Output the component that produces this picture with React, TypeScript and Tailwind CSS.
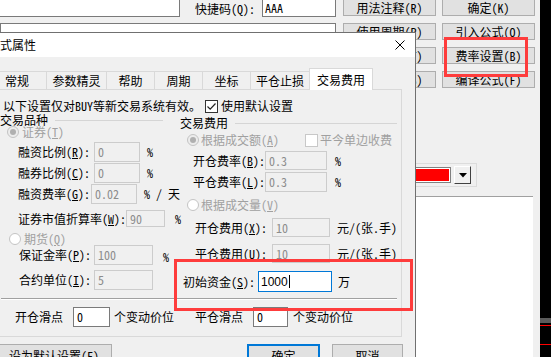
import React from "react";

function M({ t }: { t: string }) {
  const m = t.match(/^(.*\()(.)(\).*)$/);
  if (!m) return <>{t}</>;
  return (
    <>
      {m[1]}
      <span className="underline underline-offset-[1px]">{m[2]}</span>
      {m[3]}
    </>
  );
}

function Radio({ on }: { on?: boolean }) {
  return (
    <span
      className={`w-[12px] h-[12px] rounded-full border border-[#c4c4c4] flex items-center justify-center shrink-0 ${
        on ? "bg-[#ececec]" : "bg-white"
      }`}
    >
      {on && <span className="w-[6px] h-[6px] rounded-full bg-[#b0b0b0]" />}
    </span>
  );
}

function DI({ cls, v }: { cls: string; v: string }) {
  return (
    <div
      className={`${cls} border border-[#cccccc] bg-[#f0f0f0] text-[#8c8c8c] flex items-center pl-[3px] shrink-0`}
    >
      {v}
    </div>
  );
}

function Btn({ cls, children }: { cls: string; children: React.ReactNode }) {
  return (
    <div
      className={`${cls} bg-[#e1e1e1] border border-[#adadad] flex items-center justify-center shrink-0 whitespace-nowrap`}
    >
      {children}
    </div>
  );
}

export default function App() {
  return (
    <div className="relative w-[551px] h-[357px] overflow-hidden bg-[#f0f0f0] text-[12px] leading-none text-black font-['Noto_Sans_Mono_CJK_SC','Noto_Sans_CJK_SC',sans-serif] flex">
      {/* background window */}
      <div className="flex-1 flex flex-col">
        <div className="h-[88px] flex shrink-0">
          <div className="flex flex-col w-[336px]">
            <div className="flex items-center h-[17px]">
              <div className="w-[180px] h-[17px] bg-white border-r border-b border-[#7a7a7a]" />
              <span className="ml-[15px] w-[67px]">快捷码(Q):</span>
              <div className="w-[74px] h-[17px] bg-white border-l border-r border-b border-[#7a7a7a] flex items-center pl-[2px]">
                AAA
              </div>
            </div>
            <div className="mt-[6px] w-[336px] h-[20px] bg-white border border-[#7a7a7a]" />
          </div>
          <div className="ml-[7px] mt-[-1px] grid grid-cols-[93px_93px] grid-rows-[17px_17px_17px_17px] gap-x-[6px] gap-y-[7px]">
            <Btn cls="h-[17px]">用法注释(R)</Btn>
            <Btn cls="h-[17px]">确定(K)</Btn>
            <Btn cls="h-[17px]">使用周期(P)</Btn>
            <Btn cls="h-[17px]">引入公式(O)</Btn>
            <Btn cls="h-[17px]">测试公式(T)</Btn>
            <Btn cls="h-[17px]">费率设置(B)</Btn>
            <Btn cls="h-[17px]">参数设置(S)</Btn>
            <Btn cls="h-[17px]">编译公式(F)</Btn>
          </div>
        </div>
        <div className="mt-[75px] ml-[380px] w-[97px] h-[24px] border border-[#dcdcdc] flex items-center pr-[5px] shrink-0">
          <div className="flex-1 h-[16px] border border-[#808080] p-[1px] bg-white">
            <div className="w-full h-full bg-[#ff0000]" />
          </div>
          <div className="ml-[3px] w-[17px] h-[18px] border border-t-white border-l-white border-r-[#404040] border-b-[#404040] bg-[#f0f0f0] flex items-center justify-center">
            <svg width="8" height="5" viewBox="0 0 8 5">
              <path d="M0 0H8L4 4.5Z" fill="#000" />
            </svg>
          </div>
        </div>
        <div className="mt-[9px] ml-[380px] w-[153px] flex-1 bg-white border-t border-[#a0a0a0]" />
      </div>
      <div className="w-[11px] bg-black flex flex-col shrink-0">
        <div className="mt-[318px] h-[5px] bg-[#5a5a5a]" />
        <div className="mt-[2px] h-px bg-[#ff0000]" />
        <div className="mt-[18px] h-px bg-[#ff0000]" />
      </div>

      {/* dialog */}
      <div className="absolute left-0 top-[32px] w-[416px] h-[325px] z-10 flex flex-col bg-[#f0f0f0] border-t border-r border-[#707070]">
        <div className="h-[24px] bg-white flex items-center shrink-0">
          <span className="ml-[-12px]">公式属性</span>
          <svg className="ml-auto mr-[10px]" width="10" height="10" viewBox="0 0 10 10">
            <path d="M0.5 0.5L9.5 9.5M9.5 0.5L0.5 9.5" stroke="#000" strokeWidth="1" />
          </svg>
        </div>

        <div className="mt-[11px] h-[21px] flex items-end relative z-10 shrink-0">
          <div className="ml-[-13px] w-[59px] h-[18px] border-t border-l border-[#d9d9d9] flex items-center justify-center">常规</div>
          <div className="w-[60px] h-[18px] border-t border-l border-[#d9d9d9] flex items-center justify-center">参数精灵</div>
          <div className="w-[48px] h-[18px] border-t border-l border-[#d9d9d9] flex items-center justify-center">帮助</div>
          <div className="w-[48px] h-[18px] border-t border-l border-[#d9d9d9] flex items-center justify-center">周期</div>
          <div className="w-[48px] h-[18px] border-t border-l border-[#d9d9d9] flex items-center justify-center">坐标</div>
          <div className="w-[59px] h-[18px] border-t border-l border-[#d9d9d9] flex items-center justify-center">平仓止损</div>
          <div className="w-[64px] h-[22px] mb-[-1px] bg-white border-t border-l border-r border-[#d9d9d9] flex items-center justify-center">交易费用</div>
        </div>

        <div className="w-[402px] h-[248px] border-t border-r border-b border-[#d9d9d9] flex flex-col shrink-0">
          <div className="mt-[8px] h-[16px] flex items-center">
            <span className="ml-[3px] w-[202px] whitespace-nowrap">以下设置仅对BUY等新交易系统有效。</span>
            <span className="w-[13px] h-[13px] border border-[#333333] bg-white flex items-center justify-center shrink-0">
              <svg width="11" height="11" viewBox="0 0 11 11">
                <path d="M1.5 5.5L4.2 8.2L9.5 2.5" stroke="#222" strokeWidth="1.2" fill="none" />
              </svg>
            </span>
            <span className="ml-[3px]">使用默认设置</span>
          </div>

          <div className="flex">
            {/* left column */}
            <div className="w-[180px] flex flex-col whitespace-nowrap">
              <div className="h-[12px] flex items-center">
                <span>交易品种</span>
                <span className="ml-[7px] w-[108px] h-px bg-[#d5d5d5]" />
              </div>
              <div className="h-[12px] flex items-center ml-[7px]">
                <Radio on />
                <span className="ml-[3px] text-[#a0a0a0]"><M t="证券(T)" /></span>
              </div>
              <div className="mt-[4px] h-[20px] flex items-center ml-[18px]">
                <span className="w-[76px]"><M t="融资比例(R):" /></span>
                <DI cls="w-[46px] h-[20px]" v="0" />
                <span className="ml-[7px]">%</span>
              </div>
              <div className="mt-[1px] h-[20px] flex items-center ml-[18px]">
                <span className="w-[76px]"><M t="融券比例(C):" /></span>
                <DI cls="w-[46px] h-[20px]" v="0" />
                <span className="ml-[7px]">%</span>
              </div>
              <div className="mt-[1px] h-[20px] flex items-center ml-[18px]">
                <span className="w-[76px]"><M t="融资费率(G):" /></span>
                <DI cls="w-[46px] h-[20px]" v="0.02" />
                <span className="ml-[7px]">% / 天</span>
              </div>
              <div className="mt-[6px] h-[17px] flex items-center ml-[18px]">
                <span className="w-[110px]"><M t="证券市值折算率(W):" /></span>
                <DI cls="w-[39px] h-[17px]" v="90" />
                <span className="ml-[10px]">%</span>
              </div>
              <div className="mt-[6px] h-[12px] flex items-center ml-[9px]">
                <Radio />
                <span className="ml-[3px] text-[#a0a0a0]"><M t="期货(Q)" /></span>
              </div>
              <div className="h-[20px] flex items-center ml-[19px]">
                <span className="w-[75px]"><M t="保证金率(P):" /></span>
                <DI cls="w-[59px] h-[20px]" v="100" />
                <span className="ml-[10px] mt-[4px]">%</span>
              </div>
              <div className="mt-[5px] h-[20px] flex items-center ml-[19px]">
                <span className="w-[75px]"><M t="合约单位(I):" /></span>
                <DI cls="w-[59px] h-[20px]" v="5" />
              </div>
            </div>

            {/* right column */}
            <div className="flex-1 flex flex-col whitespace-nowrap">
              <div className="mt-[3px] h-[12px] flex items-center">
                <span>交易费用</span>
                <span className="ml-[7px] w-[162px] h-px bg-[#d5d5d5]" />
              </div>
              <div className="mt-[4px] h-[14px] flex items-center">
                <span className="ml-[7px] w-[118px] flex items-center">
                  <Radio on />
                  <span className="ml-[2px] text-[#a0a0a0]"><M t="根据成交额(A)" /></span>
                </span>
                <span className="w-[13px] h-[13px] border border-[#c8c8c8] bg-white shrink-0" />
                <span className="ml-[2px] text-[#a0a0a0]">平今单边收费</span>
              </div>
              <div className="mt-[4px] h-[19px] flex items-center ml-[13px]">
                <span className="w-[72px]"><M t="开仓费率(B):" /></span>
                <DI cls="w-[62px] h-[19px]" v="0.3" />
                <span className="ml-[8px]">%</span>
              </div>
              <div className="mt-[2px] h-[20px] flex items-center ml-[13px]">
                <span className="w-[72px]"><M t="平仓费率(L):" /></span>
                <DI cls="w-[62px] h-[20px]" v="0.3" />
                <span className="ml-[8px]">%</span>
              </div>
              <div className="mt-[7px] h-[12px] flex items-center ml-[7px]">
                <Radio />
                <span className="ml-[2px] text-[#a0a0a0]"><M t="根据成交量(V)" /></span>
              </div>
              <div className="mt-[7px] h-[19px] flex items-center ml-[15px]">
                <span className="w-[77px]"><M t="开仓费用(X):" /></span>
                <DI cls="w-[58px] h-[19px]" v="10" />
                <span className="ml-[7px]">元/(张.手)</span>
              </div>
              <div className="mt-[7px] h-[19px] flex items-center ml-[15px]">
                <span className="w-[77px]"><M t="平仓费用(U):" /></span>
                <DI cls="w-[58px] h-[19px]" v="10" />
                <span className="ml-[7px]">元/(张.手)</span>
              </div>
              <div className="mt-[8px] h-[21px] flex items-center ml-[3px]">
                <span className="w-[75px]"><M t="初始资金(S):" /></span>
                <div className="w-[74px] h-[21px] border border-[#0078d7] bg-white flex items-center pl-[2px] shrink-0 font-['Liberation_Sans',sans-serif]">
                  1000<span className="ml-[1px] w-px h-[13px] bg-black" />
                </div>
                <span className="ml-[6px]">万</span>
              </div>
            </div>
          </div>

          <div className="mt-[6px] ml-[1px] w-[396px] h-[2px] border-t border-[#a0a0a0] border-b border-b-white" />

          <div className="mt-[7px] h-[20px] flex items-center whitespace-nowrap">
            <span className="ml-[15px] w-[58px]">开仓滑点</span>
            <div className="w-[37px] h-[20px] border border-[#7a7a7a] bg-white flex items-center pl-[3px] shrink-0">0</div>
            <span className="ml-[4px] w-[81px]">个变动价位</span>
            <span className="w-[58px]">平仓滑点</span>
            <div className="w-[35px] h-[20px] border border-[#7a7a7a] bg-white flex items-center pl-[3px] shrink-0">0</div>
            <span className="ml-[5px]">个变动价位</span>
          </div>
        </div>

        <div className="mt-[7px] h-[23px] flex shrink-0">
          <Btn cls="ml-[-4px] w-[116px] h-[23px]">设为默认设置(F)</Btn>
          <div className="ml-[135px] w-[73px] h-[23px] bg-[#e1e1e1] border-2 border-[#0078d7] flex items-center justify-center shrink-0">确定</div>
          <Btn cls="ml-[12px] w-[71px] h-[23px]">取消</Btn>
        </div>
      </div>

      {/* red highlight boxes */}
      <div className="absolute left-[444px] top-[37px] w-[84px] h-[40px] border-[3px] border-[#fe3c3c] z-20" />
      <div className="absolute left-[174px] top-[259px] w-[239px] h-[52px] border-[3px] border-[#fe3c3c] z-20" />
    </div>
  );
}
